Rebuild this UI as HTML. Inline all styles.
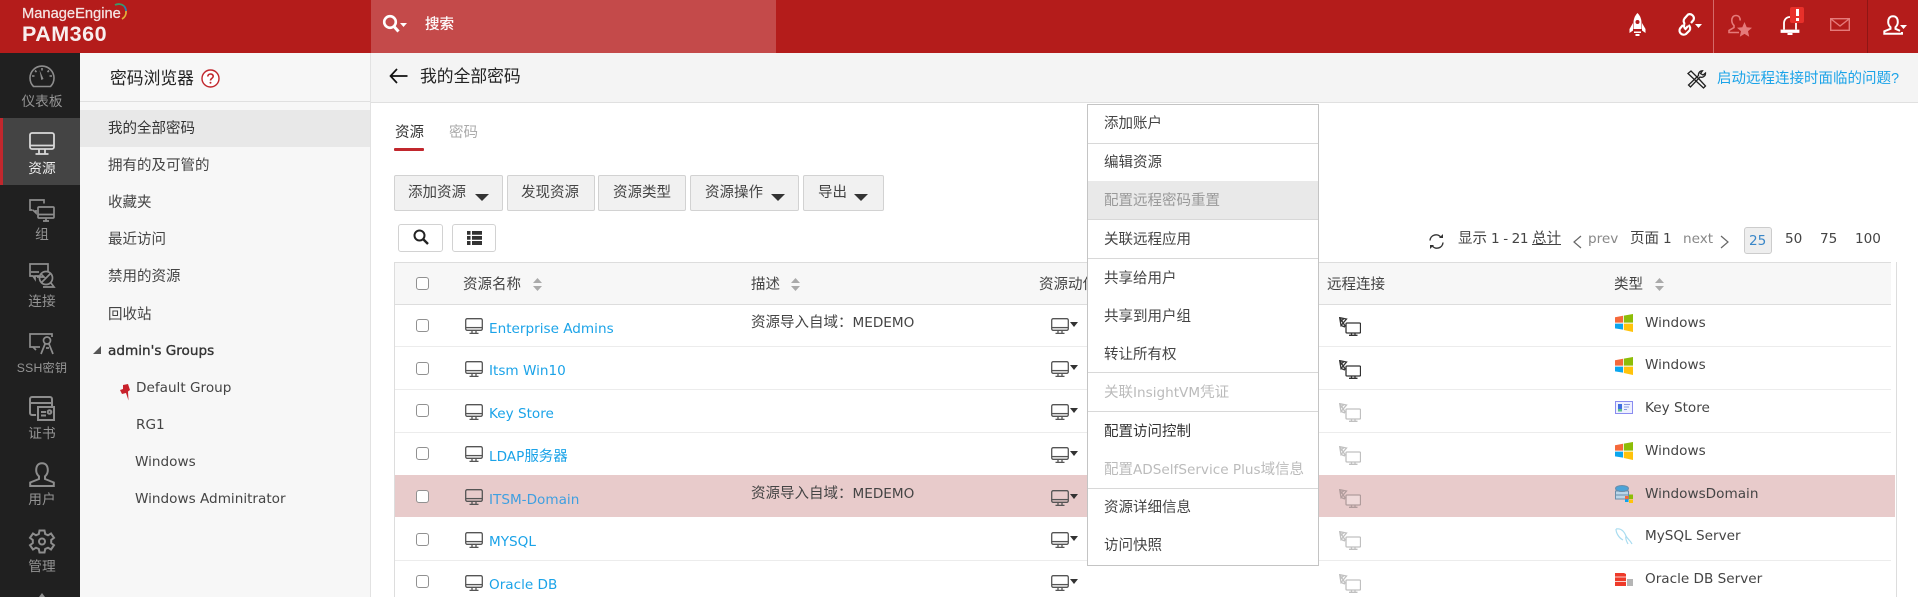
<!DOCTYPE html>
<html lang="zh"><head><meta charset="utf-8"><title>PAM360</title>
<style>
html,body{margin:0;padding:0;background:#fff}
body{position:relative;width:1918px;height:597px;overflow:hidden;font-family:"Liberation Sans","Noto Sans CJK SC",sans-serif;font-size:14.5px;color:#444}
.b{position:absolute}
.t{position:absolute;white-space:nowrap;line-height:20px;height:20px}
.l{font-family:"DejaVu Sans","Noto Sans CJK SC",sans-serif;font-size:13.6px}
.a{color:#1ba3e8}
.s{position:absolute;white-space:nowrap;line-height:20px;height:20px;text-align:center;width:80px;left:2px;color:#949494;font-size:13.7px}
.btn{position:absolute;top:175px;height:34px;background:#f1f1f1;border:1px solid #d2d2d2;border-radius:2px}
.tri{position:absolute;width:0;height:0;border-left:7px solid transparent;border-right:7px solid transparent;border-top:7px solid #333;top:194px}
.ck{position:absolute;left:416px;width:11px;height:11px;border:1.5px solid #919191;border-radius:3px;background:#fff}
.ln{position:absolute;left:395px;width:1496px;height:1px;background:#ececec}
.ml{position:absolute;left:1088px;width:230px;height:1px;background:#d8d8d8}
svg{position:absolute;overflow:visible}
</style></head><body>
<svg width="0" height="0" style="position:absolute">
<defs>
<symbol id="mon" viewBox="0 0 18 16"><g fill="none" stroke="#555" stroke-width="1.3"><rect x=".7" y=".7" width="16.6" height="11.6" rx="1.5"/><path d="M1 9.6H17"/><path d="M7 12.5V15M11 12.5V15M4.500 15.400H13.500"/></g></symbol>
<symbol id="rem" viewBox="0 0 22 19"><g fill="none" stroke="#333" stroke-width="1.300"><rect x="7" y="6" width="14.500" height="10" rx="1" fill="#fff"/><path d="M10 18.300H18.500M12.500 16V18M16 16V18"/><path d="M.7 .7L7.500 2L2 8.500ZM.7 .7L6.500 9.500M1 5L5 1.500M2 8.500L6 10"/></g></symbol>
<symbol id="win" viewBox="0 0 18 18"><path d="M0 3.200L8 1.800V8.600H0Z" fill="#f5693b"/><path d="M8.800 1.600L18 0V8.600H8.800Z" fill="#8dbd07"/><path d="M0 9.600H8V15.600L0 14.400Z" fill="#0ba6ee"/><path d="M8.800 9.600H18V18L8.800 16Z" fill="#ffc30b"/></symbol>
<symbol id="sort" viewBox="0 0 9 13"><path d="M4.500 0L9 5H0Z M4.500 13L0 8H9Z" fill="#aaa"/></symbol>
</defs></svg>

<!-- top header -->
<div class="b" style="left:0;top:0;width:1918px;height:53px;background:#b41c1b"></div>
<div class="t" style="left:22px;top:4px;color:#f4e3e2;font-size:14.7px;-webkit-text-stroke:.25px #f4e3e2">ManageEngine</div>
<svg style="left:113px;top:3px" width="16" height="17" viewBox="0 0 16 17"><path d="M2 2A8 8 0 0 1 11 3" fill="none" stroke="#3a9a6a" stroke-width="1.800"/><path d="M11 3A8 8 0 0 1 13 8" fill="none" stroke="#2b7fb0" stroke-width="1.800"/><path d="M13 8A8 8 0 0 1 9 16" fill="none" stroke="#e3b23a" stroke-width="1.800"/></svg>
<div class="t" style="left:22px;top:24px;color:#f8eeee;font-size:21.5px;font-weight:bold;letter-spacing:.5px">PAM360</div>
<div class="b" style="left:371px;top:0;width:405px;height:53px;background:#c44a4a"></div>
<svg style="left:382px;top:14px" width="26" height="20" viewBox="0 0 26 20"><circle cx="8" cy="8" r="5.800" fill="none" stroke="#fff" stroke-width="2.600"/><path d="M12 12.500L16.500 17.500" stroke="#fff" stroke-width="3"/><path d="M18 9H25L21.500 13Z" fill="#fff"/></svg>
<div class="t" style="left:425px;top:15px;color:#fff;-webkit-text-stroke:.2px #fff">搜索</div>

<svg style="left:1629px;top:13px" width="17" height="23" viewBox="0 0 17 23"><path d="M8.500 0C5.500 3 4.500 6.500 4.500 10V16H12.500V10C12.500 6.500 11.500 3 8.500 0Z" fill="#fff"/><circle cx="8.500" cy="9" r="2" fill="#b41c1b"/><path d="M4 10L.5 16V20L4 17.500ZM13 10L16.500 16V20L13 17.500Z" fill="#fff"/><path d="M5 18.500H12V20H5ZM6.500 21H10.500V23H6.500Z" fill="#fff"/></svg>
<svg style="left:1675px;top:13px" width="27" height="24" viewBox="0 0 27 24"><g fill="none" stroke="#fff" stroke-width="2.200"><path d="M8 12L5 15.500A4.200 4.200 0 0 0 11 21L14.500 17.500A4 4 0 0 0 13.500 12"/><path d="M9.500 11A4 4 0 0 0 10.500 16L13 13M16 10L18.500 7A4.200 4.200 0 0 0 13 1.500L9.500 5.500A4 4 0 0 0 10 11"/></g><path d="M20 11H27L23.500 15Z" fill="#fff"/></svg>
<div class="b" style="left:1713px;top:0;width:1px;height:53px;background:#d46a69"></div>
<svg style="left:1728px;top:14px" width="24" height="23" viewBox="0 0 24 23"><g fill="none" stroke="#e57a7a" stroke-width="1.600"><path d="M8 1.500C5 1.500 3.800 3.800 3.800 6.500C3.800 9 5 10.500 6 11.500V13.500L1 16.500V18.500H11"/><path d="M8 1.500C11 1.500 12.200 3.800 12.200 6.500"/></g><path d="M16.500 8L18.700 13.200L24 13.700L20 17.300L21.200 22.800L16.500 19.900L11.800 22.800L13 17.300L9 13.700L14.300 13.200Z" fill="#e57a7a"/></svg>
<svg style="left:1781px;top:15px" width="18" height="20" viewBox="0 0 18 20"><g fill="none" stroke="#fff" stroke-width="1.800"><path d="M3 14.500V8.500C3 4.500 5.500 2 9 2C12.500 2 15 4.500 15 8.500V14.500"/><path d="M.5 15.500H17.500V17H.5Z"/></g><path d="M6.500 18H11.500V20H6.500Z" fill="#fff"/></svg>
<div class="b" style="left:1790px;top:7px;width:14px;height:16px;background:#e8302a;border-radius:2px"></div>
<div class="b" style="left:1795.5px;top:9px;width:3px;height:7px;background:#fff"></div>
<div class="b" style="left:1795.5px;top:17.5px;width:3px;height:3px;background:#fff"></div>
<svg style="left:1830px;top:18px" width="20" height="13" viewBox="0 0 20 13"><rect x=".7" y=".7" width="18.600" height="11.600" fill="none" stroke="#e57a7a" stroke-width="1.400"/><path d="M1 1L10 8L19 1" fill="none" stroke="#e57a7a" stroke-width="1.400"/></svg>
<div class="b" style="left:1867px;top:0;width:1px;height:53px;background:#8e1615"></div>
<svg style="left:1883px;top:15px" width="24" height="20" viewBox="0 0 24 20"><path d="M10 1.200C6.500 1.200 5.200 3.800 5.200 7C5.200 9.500 6.200 11 7.500 12.200V13.800L1.300 16.300V18.800H19V17M10 1.200C13.500 1.200 14.800 3.800 14.800 7C14.800 9.500 13.800 11 12.500 12.200V13.800L17 15.800" fill="none" stroke="#fff" stroke-width="2"/><path d="M17 10H24L20.500 14Z" fill="#fff"/></svg>

<!-- left sidebar -->
<div class="b" style="left:0;top:53px;width:80px;height:544px;background:#202020"></div>
<div class="b" style="left:0;top:118px;width:80px;height:67px;background:#444"></div>
<div class="b" style="left:0;top:118px;width:3px;height:67px;background:#c1272d"></div>

<svg style="left:29px;top:66px" width="26" height="22" viewBox="0 0 26 22"><g fill="none" stroke="#8d8d8d" stroke-width="1.600"><path d="M4.500 20.500A12 12 0 1 1 21.500 20.500Z"/><path d="M13 2V4.500M3 10H5.500M20.500 10H23M6 4.500L7.500 6M20 4.500L18.500 6"/></g><path d="M10.500 4L14.500 13L12.300 14Z" fill="#8d8d8d"/></svg>
<div class="s" style="top:92px">仪表板</div>
<svg style="left:29px;top:132px" width="26" height="23" viewBox="0 0 26 23"><g fill="none" stroke="#d8d8d8" stroke-width="1.800"><rect x="1" y="1" width="24" height="16" rx="2"/><path d="M1.500 13.500H24.500"/><path d="M10 17.500V21.500M16 17.500V21.500M6.500 22H19.500"/></g></svg>
<div class="s" style="top:159px;color:#eee">资源</div>
<svg style="left:29px;top:199px" width="26" height="23" viewBox="0 0 26 23"><g fill="none" stroke="#8d8d8d" stroke-width="1.700"><path d="M15 4.500V1H1V11H3.500"/><path d="M4 11L7 14V11"/><rect x="9" y="8" width="16" height="11" rx="1"/><path d="M9 15.500H25M14 22H20M17 19V22"/></g></svg>
<div class="s" style="top:225px">组</div>
<svg style="left:29px;top:263px" width="26" height="25" viewBox="0 0 26 25"><g fill="none" stroke="#8d8d8d" stroke-width="1.700"><path d="M19 9V1H1V13H4L6 16V13H10"/><path d="M2 9H10"/><circle cx="17" cy="15" r="6.500"/><path d="M12 20L22 10M8 14H15L12 11M22 20L25 24H14"/></g></svg>
<div class="s" style="top:292px">连接</div>
<svg style="left:29px;top:333px" width="26" height="23" viewBox="0 0 26 23"><g fill="none" stroke="#8d8d8d" stroke-width="1.700"><path d="M23 4V1H1V14H4L7 17"/><path d="M4 14H11"/><circle cx="18" cy="7.500" r="3.500"/><path d="M16 11L12 21M20 11L24 21M17 15H20"/></g></svg>
<div class="s" style="top:358px;font-size:12.2px;letter-spacing:.2px">SSH密钥</div>
<svg style="left:29px;top:396px" width="26" height="25" viewBox="0 0 26 25"><g fill="none" stroke="#8d8d8d" stroke-width="2"><path d="M7 19H3A2 2 0 0 1 1 17V3A2 2 0 0 1 3 1H21A2 2 0 0 1 23 3V10"/><path d="M1 7H23"/><rect x="9" y="11" width="16" height="13"/><path d="M12 16H17M12 19.500H17"/><circle cx="20.500" cy="16" r="1.800"/></g></svg>
<div class="s" style="top:424px">证书</div>
<svg style="left:29px;top:462px" width="26" height="25" viewBox="0 0 26 25"><path d="M13 1.200C8.800 1.200 7.200 4.500 7.200 8.200C7.200 11.200 8.500 13 10 14.400V17L1.200 20.500V24H24.800V20.500L16 17V14.400C17.500 13 18.800 11.200 18.800 8.200C18.800 4.500 17.200 1.200 13 1.200Z" fill="none" stroke="#8d8d8d" stroke-width="2"/></svg>
<div class="s" style="top:490px">用户</div>
<svg style="left:29px;top:529px" width="26" height="25" viewBox="0 0 26 25"><g fill="none" stroke="#8d8d8d" stroke-width="2"><path d="M10.500 1.500H15.500L16.200 5L19 6.300L22 4.500L25 8.800L22.200 11V14L25 16.200L22 20.500L19 18.700L16.200 20L15.500 23.500H10.500L9.800 20L7 18.700L4 20.500L1 16.200L3.800 14V11L1 8.800L4 4.500L7 6.300L9.800 5Z"/><circle cx="13" cy="12.500" r="3"/></g></svg>
<div class="s" style="top:557px">管理</div>
<svg style="left:38px;top:593px" width="8" height="4" viewBox="0 0 8 4"><path d="M4 0L7 4H1Z" fill="#8d8d8d"/></svg>

<!-- tree panel -->
<div class="b" style="left:80px;top:53px;width:290px;height:544px;background:#f7f7f7"></div>
<div class="b" style="left:370px;top:53px;width:1px;height:544px;background:#e2e2e2"></div>
<div class="b" style="left:80px;top:101px;width:290px;height:1px;background:#e0e0e0"></div>
<div class="t" style="left:110px;top:69px;font-size:16.8px;color:#222">密码浏览器</div>
<svg style="left:201px;top:69px" width="19" height="19" viewBox="0 0 19 19"><circle cx="9.500" cy="9.500" r="8.500" fill="#fff" stroke="#c1272d" stroke-width="1.400"/><path d="M6.800 7.500C6.800 4.200 12.200 4.200 12.200 7.300C12.200 9.500 9.500 9.200 9.500 11.500" fill="none" stroke="#c1272d" stroke-width="1.600"/><circle cx="9.500" cy="13.800" r="1" fill="#c1272d"/></svg>
<div class="b" style="left:80px;top:110px;width:290px;height:37px;background:#e8e8e8"></div>
<div class="t" style="left:108px;top:119px;color:#333">我的全部密码</div>
<div class="t" style="left:108px;top:156px">拥有的及可管的</div>
<div class="t" style="left:108px;top:193px">收藏夹</div>
<div class="t" style="left:108px;top:230px">最近访问</div>
<div class="t" style="left:108px;top:267px">禁用的资源</div>
<div class="t" style="left:108px;top:305px">回收站</div>
<svg style="left:93px;top:346px" width="8" height="8" viewBox="0 0 8 8"><path d="M8 0V8H0Z" fill="#555"/></svg>
<div class="t l" style="left:108px;top:341px;color:#333;-webkit-text-stroke:.35px #333">admin's Groups</div>
<svg style="left:120px;top:384px" width="11" height="17" viewBox="0 0 11 17"><path d="M3 1L8 0L10 6L8 7.500L8.500 16.500L6 9L2 10L0 6L3 5Z" fill="#c8202a"/></svg>
<div class="t l" style="left:136px;top:378px">Default Group</div>
<div class="t l" style="left:136px;top:415px">RG1</div>
<div class="t l" style="left:135px;top:452px">Windows</div>
<div class="t l" style="left:135px;top:489px">Windows Adminitrator</div>

<!-- title bar -->
<div class="b" style="left:371px;top:53px;width:1547px;height:49px;background:#f4f4f4"></div>
<div class="b" style="left:371px;top:102px;width:1547px;height:1px;background:#e0e0e0"></div>
<svg style="left:389px;top:68px" width="19" height="16" viewBox="0 0 19 16"><path d="M8 1L1.500 8L8 15M1.500 8H18.500" fill="none" stroke="#111" stroke-width="1.700"/></svg>
<div class="t" style="left:420px;top:66.5px;font-size:16.8px;color:#222">我的全部密码</div>
<svg style="left:1687px;top:70px" width="20" height="19" viewBox="0 0 20 19"><g fill="none" stroke="#222" stroke-width="1.300"><path d="M1 3.500L4 1L12 9L18.500 16L16.500 18L9 11Z"/><path d="M18.500 3A4 4 0 0 1 13 7L3.500 17L1.500 15L11.500 5.500A4 4 0 0 1 15.500 .8L13.500 3.500L16 5Z"/></g></svg>
<div class="t a" style="left:1717px;top:69px">启动远程连接时面临的问题?</div>

<!-- tabs -->
<div class="t" style="left:395px;top:123px;color:#333">资源</div>
<div class="t" style="left:449px;top:123px;color:#aaa">密码</div>
<div class="b" style="left:394px;top:148px;width:30px;height:3px;background:#c1272d;border-radius:1px"></div>

<!-- buttons -->
<div class="btn" style="left:394px;width:107px"></div><div class="t" style="left:408px;top:183px">添加资源</div><div class="tri" style="left:475px"></div>
<div class="btn" style="left:507px;width:86px"></div><div class="t" style="left:521px;top:183px">发现资源</div>
<div class="btn" style="left:598px;width:86px"></div><div class="t" style="left:613px;top:183px">资源类型</div>
<div class="btn" style="left:690px;width:107px"></div><div class="t" style="left:705px;top:183px">资源操作</div><div class="tri" style="left:771px"></div>
<div class="btn" style="left:803px;width:79px"></div><div class="t" style="left:818px;top:183px">导出</div><div class="tri" style="left:854px"></div>

<div class="b" style="left:398px;top:224px;width:43px;height:26px;border:1px solid #d2d2d2;border-radius:3px"></div>
<svg style="left:413px;top:229px" width="16" height="16" viewBox="0 0 16 16"><circle cx="6.500" cy="6.500" r="5" fill="none" stroke="#222" stroke-width="2"/><path d="M10 10L15 15" stroke="#222" stroke-width="2.400"/></svg>
<div class="b" style="left:452px;top:224px;width:42px;height:26px;border:1px solid #d2d2d2;border-radius:3px"></div>
<svg style="left:467px;top:231px" width="15" height="14" viewBox="0 0 15 14"><path d="M0 0H3.500V3.700H0ZM5 0H15V3.700H5ZM0 5H3.500V8.700H0ZM5 5H15V8.700H5ZM0 10H3.500V14H0ZM5 10H15V14H5Z" fill="#333"/></svg>

<!-- pagination -->
<svg style="left:1429px;top:234px" width="15" height="15" viewBox="0 0 15 15"><g fill="none" stroke="#333" stroke-width="1.400"><path d="M1 6.500A6 6 0 0 1 12 3.500"/><path d="M14 8.500A6 6 0 0 1 3 11.500"/></g><path d="M10 4H14V0ZM5 11H1V15Z" fill="#333"/></svg>
<div class="t" style="left:1458px;top:229px">显示 <span class="l" style="letter-spacing:-.4px">1 - 21</span></div>
<div class="t" style="left:1532px;top:229px;text-decoration:underline">总计</div>
<svg style="left:1573px;top:235px" width="9" height="14" viewBox="0 0 9 14"><path d="M8 1L1 7L8 13" fill="none" stroke="#666" stroke-width="1.200"/></svg>
<div class="t l" style="left:1588px;top:229px;color:#888">prev</div>
<div class="t" style="left:1630px;top:229px">页面 <span class="l">1</span></div>
<div class="t l" style="left:1683px;top:229px;color:#888">next</div>
<svg style="left:1720px;top:235px" width="9" height="14" viewBox="0 0 9 14"><path d="M1 1L8 7L1 13" fill="none" stroke="#666" stroke-width="1.200"/></svg>
<div class="b" style="left:1744px;top:227px;width:26px;height:25px;background:#eee;border:1px solid #ccc;border-radius:3px"></div>
<div class="t l" style="left:1749px;top:231px;color:#3a87c8">25</div>
<div class="t l" style="left:1785px;top:229px">50</div>
<div class="t l" style="left:1820px;top:229px">75</div>
<div class="t l" style="left:1855px;top:229px">100</div>

<!-- table -->
<div class="b" style="left:394px;top:262px;width:1px;height:335px;background:#ddd"></div>
<div class="b" style="left:1896px;top:262px;width:1px;height:335px;background:#ddd"></div>
<div class="b" style="left:395px;top:262px;width:1496px;height:42px;background:#f7f7f7"></div>
<div class="b" style="left:394px;top:262px;width:1497px;height:1px;background:#ddd"></div>
<div class="b" style="left:395px;top:304px;width:1496px;height:1px;background:#ddd"></div>
<div class="ln" style="top:346px"></div><div class="ln" style="top:389px"></div><div class="ln" style="top:432px"></div><div class="ln" style="top:560px"></div>
<div class="b" style="left:395px;top:475px;width:1500px;height:42px;background:#e8cbcb"></div>

<div class="ck" style="top:277px"></div>
<div class="t" style="left:463px;top:275px;color:#444">资源名称</div><svg style="left:533px;top:278px" width="9" height="13"><use href="#sort"/></svg>
<div class="t" style="left:751px;top:275px">描述</div><svg style="left:791px;top:278px" width="9" height="13"><use href="#sort"/></svg>
<div class="t" style="left:1039px;top:275px">资源动作</div>
<div class="t" style="left:1327px;top:275px">远程连接</div>
<div class="t" style="left:1614px;top:275px">类型</div><svg style="left:1655px;top:278px" width="9" height="13"><use href="#sort"/></svg>

<!-- row 1 -->
<div class="ck" style="top:319px"></div><svg style="left:465px;top:318px" width="18" height="16"><use href="#mon"/></svg>
<div class="t l a" style="left:489px;top:319px">Enterprise Admins</div>
<div class="t" style="left:751px;top:313px">资源导入自域：<span class="l">MEDEMO</span></div>
<svg style="left:1051px;top:318px" width="18" height="16"><use href="#mon"/></svg><svg style="left:1070px;top:322px" width="9" height="5"><path d="M0 0H8L4 5Z" fill="#333"/></svg>
<svg style="left:1339px;top:317px" width="22" height="19"><use href="#rem"/></svg>
<svg style="left:1615px;top:314px" width="18" height="18"><use href="#win"/></svg><div class="t l" style="left:1645px;top:313px">Windows</div>
<!-- row 2 -->
<div class="ck" style="top:362px"></div><svg style="left:465px;top:361px" width="18" height="16"><use href="#mon"/></svg>
<div class="t l a" style="left:489px;top:361px">Itsm Win10</div>
<svg style="left:1051px;top:361px" width="18" height="16"><use href="#mon"/></svg><svg style="left:1070px;top:365px" width="9" height="5"><path d="M0 0H8L4 5Z" fill="#333"/></svg>
<svg style="left:1339px;top:360px" width="22" height="19"><use href="#rem"/></svg>
<svg style="left:1615px;top:357px" width="18" height="18"><use href="#win"/></svg><div class="t l" style="left:1645px;top:355px">Windows</div>
<!-- row 3 -->
<div class="ck" style="top:404px"></div><svg style="left:465px;top:404px" width="18" height="16"><use href="#mon"/></svg>
<div class="t l a" style="left:489px;top:404px">Key Store</div>
<svg style="left:1051px;top:404px" width="18" height="16"><use href="#mon"/></svg><svg style="left:1070px;top:408px" width="9" height="5"><path d="M0 0H8L4 5Z" fill="#333"/></svg>
<svg style="left:1339px;top:403px;opacity:.3" width="22" height="19"><use href="#rem"/></svg>
<svg style="left:1615px;top:401px" width="18" height="13" viewBox="0 0 18 13"><rect x=".5" y=".5" width="17" height="12" fill="#eef0ff" stroke="#8a8cf0"/><rect x="3" y="3" width="4" height="5" fill="#3f6fe0"/><rect x="3" y="8" width="4" height="2.500" fill="#5cc08a"/><path d="M9 3.500H15M9 6H14M9 8.500H12" stroke="#8a9be0"/></svg><div class="t l" style="left:1645px;top:398px">Key Store</div>
<!-- row 4 -->
<div class="ck" style="top:447px"></div><svg style="left:465px;top:446px" width="18" height="16"><use href="#mon"/></svg>
<div class="t l a" style="left:489px;top:447px">LDAP<span style="font-size:14.5px;font-family:'Liberation Sans','Noto Sans CJK SC',sans-serif">服务器</span></div>
<svg style="left:1051px;top:447px" width="18" height="16"><use href="#mon"/></svg><svg style="left:1070px;top:451px" width="9" height="5"><path d="M0 0H8L4 5Z" fill="#333"/></svg>
<svg style="left:1339px;top:446px;opacity:.3" width="22" height="19"><use href="#rem"/></svg>
<svg style="left:1615px;top:442px" width="18" height="18"><use href="#win"/></svg><div class="t l" style="left:1645px;top:441px">Windows</div>
<!-- row 5 -->
<div class="ck" style="top:490px"></div><svg style="left:465px;top:489px" width="18" height="16"><use href="#mon"/></svg>
<div class="t l" style="left:489px;top:490px;color:#3f9fe0">ITSM-Domain</div>
<div class="t" style="left:751px;top:484px">资源导入自域：<span class="l">MEDEMO</span></div>
<svg style="left:1051px;top:490px" width="18" height="16"><use href="#mon"/></svg><svg style="left:1070px;top:494px" width="9" height="5"><path d="M0 0H8L4 5Z" fill="#333"/></svg>
<svg style="left:1339px;top:489px;opacity:.3" width="22" height="19"><use href="#rem"/></svg>
<svg style="left:1615px;top:485px" width="18" height="18" viewBox="0 0 18 18"><g stroke="#6a8eaa" fill="#bcd6e8"><rect x=".5" y="6" width="13" height="4"/><rect x=".5" y="10" width="13" height="4"/><ellipse cx="7" cy="3.500" rx="6.500" ry="3" fill="#4ba3d8"/></g><path d="M10 11H13.500V14H10Z" fill="#f5693b"/><path d="M14 9.500H18V14H14Z" fill="#8dbd07"/><path d="M10 14.500H13.500V17H10Z" fill="#0ba6ee"/><path d="M14 14.500H18V18H14Z" fill="#ffc30b"/></svg><div class="t l" style="left:1645px;top:484px">WindowsDomain</div>
<!-- row 6 -->
<div class="ck" style="top:533px"></div><svg style="left:465px;top:532px" width="18" height="16"><use href="#mon"/></svg>
<div class="t l a" style="left:489px;top:532px">MYSQL</div>
<svg style="left:1051px;top:532px" width="18" height="16"><use href="#mon"/></svg><svg style="left:1070px;top:536px" width="9" height="5"><path d="M0 0H8L4 5Z" fill="#333"/></svg>
<svg style="left:1339px;top:531px;opacity:.3" width="22" height="19"><use href="#rem"/></svg>
<svg style="left:1615px;top:528px" width="18" height="18" viewBox="0 0 18 18"><path d="M1 1C6 0 9 3 11 8C12.500 11 15 12 17 16M1 1C1 5 4 10 8 12M11 8C10 11 12 14 13 16" fill="none" stroke="#a9dcf0" stroke-width="1.200"/></svg><div class="t l" style="left:1645px;top:526px">MySQL Server</div>
<!-- row 7 -->
<div class="ck" style="top:575px"></div><svg style="left:465px;top:575px" width="18" height="16"><use href="#mon"/></svg>
<div class="t l a" style="left:489px;top:575px">Oracle DB</div>
<svg style="left:1051px;top:575px" width="18" height="16"><use href="#mon"/></svg><svg style="left:1070px;top:579px" width="9" height="5"><path d="M0 0H8L4 5Z" fill="#333"/></svg>
<svg style="left:1339px;top:574px;opacity:.3" width="22" height="19"><use href="#rem"/></svg>
<svg style="left:1615px;top:573px" width="18" height="13" viewBox="0 0 18 13"><path d="M0 0H9L11 1V13H0Z" fill="#ee3a2a"/><path d="M0 4H11M0 8.500H11" stroke="#fff" stroke-width=".7"/><rect x="12" y="6" width="6" height="7" fill="#b5b5b5"/></svg><div class="t l" style="left:1645px;top:569px">Oracle DB Server</div>

<!-- dropdown -->
<div class="b" style="left:1087px;top:104px;width:230px;height:460px;background:#fff;border:1px solid #c4c4c4"></div>
<div class="b" style="left:1088px;top:181px;width:230px;height:38px;background:#e9e9e9"></div>
<div class="ml" style="top:143px"></div><div class="ml" style="top:219px"></div><div class="ml" style="top:258px"></div><div class="ml" style="top:372px"></div><div class="ml" style="top:411px"></div><div class="ml" style="top:488px"></div>
<div class="t" style="left:1104px;top:114px">添加账户</div>
<div class="t" style="left:1104px;top:153px">编辑资源</div>
<div class="t" style="left:1104px;top:191px;color:#999">配置远程密码重置</div>
<div class="t" style="left:1104px;top:230px">关联远程应用</div>
<div class="t" style="left:1104px;top:269px">共享给用户</div>
<div class="t" style="left:1104px;top:307px">共享到用户组</div>
<div class="t" style="left:1104px;top:345px">转让所有权</div>
<div class="t" style="left:1104px;top:383px;color:#bbb">关联<span class="l">InsightVM</span>凭证</div>
<div class="t" style="left:1104px;top:422px;color:#333">配置访问控制</div>
<div class="t" style="left:1104px;top:460px;color:#bbb">配置<span class="l">ADSelfService Plus</span>域信息</div>
<div class="t" style="left:1104px;top:498px">资源详细信息</div>
<div class="t" style="left:1104px;top:536px">访问快照</div>
</body></html>
